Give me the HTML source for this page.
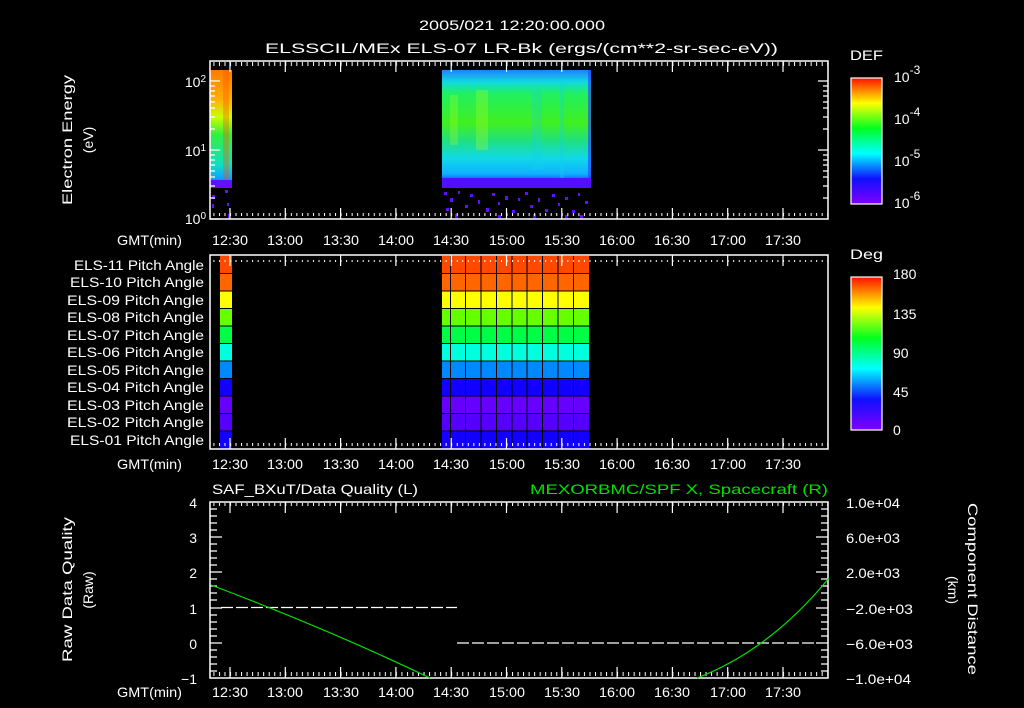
<!DOCTYPE html>
<html><head><meta charset="utf-8"><style>
html,body{margin:0;padding:0;background:#000;}
svg{display:block}
text{font-family:"Liberation Sans",sans-serif;fill:#fff;font-size:14px}
</style></head><body>
<svg width="1024" height="708" viewBox="0 0 1024 708" xmlns="http://www.w3.org/2000/svg">
<defs>
<pattern id="tkT" x="230" y="0" width="5.53" height="10" patternUnits="userSpaceOnUse"><rect x="0" y="0" width="1" height="6" fill="#fff"/></pattern>
<linearGradient id="specL" x1="0" y1="0" x2="0" y2="1">
<stop offset="0" stop-color="#ff7a00"/><stop offset="0.25" stop-color="#ffb000"/><stop offset="0.4" stop-color="#c8ff00"/><stop offset="0.55" stop-color="#30f040"/><stop offset="0.8" stop-color="#10e0c0"/><stop offset="0.92" stop-color="#10a0ff"/><stop offset="1" stop-color="#5020ff"/></linearGradient>
<linearGradient id="specR" x1="0" y1="0" x2="0" y2="1">
<stop offset="0" stop-color="#2080ff"/><stop offset="0.1" stop-color="#10d8e0"/><stop offset="0.2" stop-color="#20f060"/><stop offset="0.45" stop-color="#40f020"/><stop offset="0.6" stop-color="#20e080"/><stop offset="0.75" stop-color="#10d8e8"/><stop offset="0.88" stop-color="#10b0ff"/><stop offset="0.95" stop-color="#1040ff"/><stop offset="1" stop-color="#6010ff"/></linearGradient>
<linearGradient id="cbar" x1="0" y1="0" x2="0" y2="1">
<stop offset="0" stop-color="#ff1000"/><stop offset="0.2" stop-color="#ffff00"/><stop offset="0.4" stop-color="#00ff20"/><stop offset="0.6" stop-color="#00ffff"/><stop offset="0.8" stop-color="#1010ff"/><stop offset="1" stop-color="#8000ff"/></linearGradient>
</defs>

<text x="419" y="30" font-size="17" textLength="186" lengthAdjust="spacingAndGlyphs">2005/021 12:20:00.000</text>
<text x="265" y="53" font-size="17" textLength="513" lengthAdjust="spacingAndGlyphs">ELSSCIL/MEx ELS-07 LR-Bk  (ergs/(cm**2-sr-sec-eV))</text>

<!-- TOP PANEL -->
<rect x="210" y="70" width="22" height="118" fill="url(#specL)"/>
<rect x="223" y="70" width="6" height="118" fill="#ff5000" opacity="0.35"/>
<rect x="442" y="70" width="149" height="118" fill="url(#specR)"/>
<rect x="476" y="90" width="12" height="60" fill="#b0ff20" opacity="0.3"/>
<rect x="450" y="95" width="8" height="50" fill="#c0ff20" opacity="0.25"/>
<rect x="532" y="90" width="10" height="80" fill="#10d0f0" opacity="0.25"/>
<rect x="560" y="80" width="4" height="100" fill="#10d0f0" opacity="0.3"/>
<rect x="588" y="70" width="3" height="118" fill="#2040ff" opacity="0.6"/>
<rect x="210" y="180" width="22" height="8" fill="#6010ff"/>
<rect x="442" y="178" width="149" height="10" fill="#5010ff"/>
<g fill="#6010ff">
<rect x="212" y="195" width="3" height="4"/><rect x="225" y="190" width="3" height="3"/><rect x="212" y="204" width="2" height="4"/><rect x="227" y="203" width="2" height="3"/><rect x="228" y="214" width="2" height="4"/>
<rect x="444" y="192" width="3" height="3"/><rect x="450" y="198" width="3" height="4"/><rect x="458" y="191" width="2" height="3"/><rect x="446" y="208" width="3" height="3"/><rect x="465" y="205" width="3" height="3"/><rect x="470" y="194" width="3" height="3"/>
<rect x="478" y="200" width="2" height="4"/><rect x="486" y="208" width="3" height="4"/><rect x="492" y="193" width="3" height="3"/><rect x="498" y="202" width="2" height="3"/><rect x="505" y="196" width="3" height="4"/><rect x="512" y="210" width="3" height="3"/>
<rect x="518" y="198" width="2" height="3"/><rect x="525" y="192" width="3" height="3"/><rect x="530" y="205" width="3" height="3"/><rect x="538" y="198" width="2" height="4"/><rect x="545" y="209" width="3" height="3"/><rect x="552" y="194" width="3" height="3"/>
<rect x="558" y="203" width="2" height="3"/><rect x="565" y="197" width="3" height="3"/><rect x="572" y="210" width="3" height="3"/><rect x="578" y="193" width="2" height="3"/><rect x="585" y="201" width="3" height="3"/><rect x="455" y="214" width="3" height="4"/><rect x="498" y="215" width="3" height="3"/><rect x="533" y="214" width="3" height="4"/><rect x="565" y="215" width="3" height="3"/><rect x="580" y="215" width="3" height="3"/>
</g>
<rect x="210" y="61" width="618" height="158" fill="none" stroke="#fff" stroke-width="1.5"/>
<rect x="210" y="62" width="618" height="6" fill="url(#tkT)"/>
<rect x="210" y="213" width="618" height="6" fill="url(#tkT)"/>
<g stroke="#fff" stroke-width="1.2">
<path d="M230 61v11M285.3 61v11M340.6 61v11M395.9 61v11M451.2 61v11M506.5 61v11M561.8 61v11M617.1 61v11M672.4 61v11M727.7 61v11M783 61v11"/>
<path d="M230 219v-11M285.3 219v-11M340.6 219v-11M395.9 219v-11M451.2 219v-11M506.5 219v-11M561.8 219v-11M617.1 219v-11M672.4 219v-11M727.7 219v-11M783 219v-11"/>
<path d="M210 81h10M210 150h10M210 219h10M210 198h5M210 186h5M210 177h5M210 171h5M210 165h5M210 160h5M210 155h5M210 129h5M210 117h5M210 108h5M210 102h5M210 96h5M210 91h5M210 86h5"/>
<path d="M828 81h-10M828 150h-10M828 198h-5M828 186h-5M828 177h-5M828 171h-5M828 165h-5M828 160h-5M828 155h-5M828 129h-5M828 117h-5M828 108h-5M828 102h-5M828 96h-5M828 91h-5M828 86h-5"/>
</g>
<text x="206" y="87" text-anchor="end" font-size="14">10<tspan dy="-5" font-size="10">2</tspan></text>
<text x="206" y="156" text-anchor="end" font-size="14">10<tspan dy="-5" font-size="10">1</tspan></text>
<text x="206" y="224" text-anchor="end" font-size="14">10<tspan dy="-5" font-size="10">0</tspan></text>
<text transform="translate(72,205) rotate(-90)" font-size="15" textLength="130" lengthAdjust="spacingAndGlyphs">Electron Energy</text>
<text transform="translate(93,140) rotate(-90)" text-anchor="middle" font-size="15">(eV)</text>
<g font-size="15">
<text x="212" y="245" textLength="36" lengthAdjust="spacingAndGlyphs">12:30</text><text x="267" y="245" textLength="36" lengthAdjust="spacingAndGlyphs">13:00</text><text x="323" y="245" textLength="36" lengthAdjust="spacingAndGlyphs">13:30</text><text x="378" y="245" textLength="36" lengthAdjust="spacingAndGlyphs">14:00</text><text x="433" y="245" textLength="36" lengthAdjust="spacingAndGlyphs">14:30</text><text x="489" y="245" textLength="36" lengthAdjust="spacingAndGlyphs">15:00</text><text x="544" y="245" textLength="36" lengthAdjust="spacingAndGlyphs">15:30</text><text x="599" y="245" textLength="36" lengthAdjust="spacingAndGlyphs">16:00</text><text x="654" y="245" textLength="36" lengthAdjust="spacingAndGlyphs">16:30</text><text x="710" y="245" textLength="36" lengthAdjust="spacingAndGlyphs">17:00</text><text x="765" y="245" textLength="36" lengthAdjust="spacingAndGlyphs">17:30</text>
</g>
<text x="117" y="245" font-size="15" textLength="65" lengthAdjust="spacingAndGlyphs">GMT(min)</text>
<!-- DEF colorbar -->
<text x="850" y="60" font-size="17" textLength="33" lengthAdjust="spacingAndGlyphs">DEF</text>
<rect x="851" y="78" width="31" height="126" fill="url(#cbar)" stroke="#fff" stroke-width="1.2"/>
<text x="894" y="82" font-size="17">10<tspan dy="-8" font-size="12">-3</tspan></text>
<text x="894" y="124" font-size="17">10<tspan dy="-8" font-size="12">-4</tspan></text>
<text x="894" y="166" font-size="17">10<tspan dy="-8" font-size="12">-5</tspan></text>
<text x="894" y="208" font-size="17">10<tspan dy="-8" font-size="12">-6</tspan></text>

<!-- PITCH PANEL -->
<rect x="220" y="256" width="12" height="17.5" fill="#ff4800"/>
<rect x="220" y="273.5" width="12" height="17.5" fill="#ff6600"/>
<rect x="220" y="291" width="12" height="17.5" fill="#ffff00"/>
<rect x="220" y="308.5" width="12" height="17.5" fill="#66ff00"/>
<rect x="220" y="326" width="12" height="17.5" fill="#00ff44"/>
<rect x="220" y="343.5" width="12" height="17.5" fill="#00ffdd"/>
<rect x="220" y="361" width="12" height="17.5" fill="#0088ff"/>
<rect x="220" y="378.5" width="12" height="17.5" fill="#1100ff"/>
<rect x="220" y="396" width="12" height="17.5" fill="#6600ff"/>
<rect x="220" y="413.5" width="12" height="17.5" fill="#5500ff"/>
<rect x="220" y="431" width="12" height="18" fill="#1100ff"/>
<rect x="442" y="256" width="147" height="17.5" fill="#ff4800"/>
<rect x="442" y="273.5" width="147" height="17.5" fill="#ff6600"/>
<rect x="442" y="291" width="147" height="17.5" fill="#ffff00"/>
<rect x="442" y="308.5" width="147" height="17.5" fill="#66ff00"/>
<rect x="442" y="326" width="147" height="17.5" fill="#00ff44"/>
<rect x="442" y="343.5" width="147" height="17.5" fill="#00ffdd"/>
<rect x="442" y="361" width="147" height="17.5" fill="#0088ff"/>
<rect x="442" y="378.5" width="147" height="17.5" fill="#1100ff"/>
<rect x="442" y="396" width="147" height="17.5" fill="#6600ff"/>
<rect x="442" y="413.5" width="147" height="17.5" fill="#5500ff"/>
<rect x="442" y="431" width="147" height="18" fill="#1100ff"/>
<g stroke="#000" stroke-width="1">
<path d="M220 273.5h12M220 291h12M220 308.5h12M220 326h12M220 343.5h12M220 361h12M220 378.5h12M220 396h12M220 413.5h12M220 431h12"/>
<path d="M442 273.5h147M442 291h147M442 308.5h147M442 326h147M442 343.5h147M442 361h147M442 378.5h147M442 396h147M442 413.5h147M442 431h147"/>
<path d="M450.5 256v193M465.5 256v193M481 256v193M496.5 256v193M512 256v193M527 256v193M542.5 256v193M558 256v193M573.5 256v193"/>
</g>
<rect x="210" y="255" width="618" height="194" fill="none" stroke="#fff" stroke-width="1.5"/>
<rect x="210" y="256" width="618" height="6" fill="url(#tkT)"/>
<rect x="210" y="443" width="618" height="6" fill="url(#tkT)"/>
<g stroke="#fff" stroke-width="1.2">
<path d="M230 255v11M285.3 255v11M340.6 255v11M395.9 255v11M451.2 255v11M506.5 255v11M561.8 255v11M617.1 255v11M672.4 255v11M727.7 255v11M783 255v11"/>
<path d="M230 449v-11M285.3 449v-11M340.6 449v-11M395.9 449v-11M451.2 449v-11M506.5 449v-11M561.8 449v-11M617.1 449v-11M672.4 449v-11M727.7 449v-11M783 449v-11"/>
</g>
<g font-size="14">
<text x="74" y="270" textLength="130" lengthAdjust="spacingAndGlyphs">ELS-11 Pitch Angle</text>
<text x="70" y="287" textLength="134" lengthAdjust="spacingAndGlyphs">ELS-10 Pitch Angle</text>
<text x="67" y="305" textLength="137" lengthAdjust="spacingAndGlyphs">ELS-09 Pitch Angle</text>
<text x="67" y="322" textLength="137" lengthAdjust="spacingAndGlyphs">ELS-08 Pitch Angle</text>
<text x="67" y="340" textLength="137" lengthAdjust="spacingAndGlyphs">ELS-07 Pitch Angle</text>
<text x="67" y="357" textLength="137" lengthAdjust="spacingAndGlyphs">ELS-06 Pitch Angle</text>
<text x="67" y="375" textLength="137" lengthAdjust="spacingAndGlyphs">ELS-05 Pitch Angle</text>
<text x="67" y="392" textLength="137" lengthAdjust="spacingAndGlyphs">ELS-04 Pitch Angle</text>
<text x="67" y="410" textLength="137" lengthAdjust="spacingAndGlyphs">ELS-03 Pitch Angle</text>
<text x="67" y="427" textLength="137" lengthAdjust="spacingAndGlyphs">ELS-02 Pitch Angle</text>
<text x="70" y="445" textLength="134" lengthAdjust="spacingAndGlyphs">ELS-01 Pitch Angle</text>
</g>
<g font-size="15">
<text x="212" y="469" textLength="36" lengthAdjust="spacingAndGlyphs">12:30</text><text x="267" y="469" textLength="36" lengthAdjust="spacingAndGlyphs">13:00</text><text x="323" y="469" textLength="36" lengthAdjust="spacingAndGlyphs">13:30</text><text x="378" y="469" textLength="36" lengthAdjust="spacingAndGlyphs">14:00</text><text x="433" y="469" textLength="36" lengthAdjust="spacingAndGlyphs">14:30</text><text x="489" y="469" textLength="36" lengthAdjust="spacingAndGlyphs">15:00</text><text x="544" y="469" textLength="36" lengthAdjust="spacingAndGlyphs">15:30</text><text x="599" y="469" textLength="36" lengthAdjust="spacingAndGlyphs">16:00</text><text x="654" y="469" textLength="36" lengthAdjust="spacingAndGlyphs">16:30</text><text x="710" y="469" textLength="36" lengthAdjust="spacingAndGlyphs">17:00</text><text x="765" y="469" textLength="36" lengthAdjust="spacingAndGlyphs">17:30</text>
</g>
<text x="117" y="469" font-size="15" textLength="65" lengthAdjust="spacingAndGlyphs">GMT(min)</text>
<text x="850" y="259" font-size="17" textLength="33" lengthAdjust="spacingAndGlyphs">Deg</text>
<rect x="851" y="277" width="31" height="153" fill="url(#cbar)" stroke="#fff" stroke-width="1.2"/>
<g font-size="17"><text x="893" y="279">180</text><text x="893" y="319">135</text><text x="893" y="358">90</text><text x="893" y="397">45</text><text x="893" y="435">0</text></g>

<!-- BOTTOM PANEL -->
<text x="212" y="494" font-size="16" textLength="206" lengthAdjust="spacingAndGlyphs">SAF_BXuT/Data Quality (L)</text>
<text x="530" y="494" font-size="16" style="fill:#00e000" textLength="298" lengthAdjust="spacingAndGlyphs">MEXORBMC/SPF X, Spacecraft (R)</text>
<rect x="210" y="502" width="618" height="176" fill="none" stroke="#fff" stroke-width="1.5"/>
<rect x="210" y="503" width="618" height="6" fill="url(#tkT)"/>
<rect x="210" y="672" width="618" height="6" fill="url(#tkT)"/>
<g stroke="#fff" stroke-width="1.2">
<path d="M230 502v11M285.3 502v11M340.6 502v11M395.9 502v11M451.2 502v11M506.5 502v11M561.8 502v11M617.1 502v11M672.4 502v11M727.7 502v11M783 502v11"/>
<path d="M230 678v-11M285.3 678v-11M340.6 678v-11M395.9 678v-11M451.2 678v-11M506.5 678v-11M561.8 678v-11M617.1 678v-11M672.4 678v-11M727.7 678v-11M783 678v-11"/>
<path d="M210 537h12M210 572h12M210 608h12M210 643h12M210 509h7M210 516h7M210 523h7M210 530h7M210 544h7M210 551h7M210 558h7M210 565h7M210 579h7M210 586h7M210 593h7M210 600h7M210 615h7M210 622h7M210 629h7M210 636h7M210 650h7M210 657h7M210 664h7M210 671h7"/>
<path d="M828 537h-12M828 572h-12M828 608h-12M828 643h-12M828 509h-7M828 516h-7M828 523h-7M828 530h-7M828 544h-7M828 551h-7M828 558h-7M828 565h-7M828 579h-7M828 586h-7M828 593h-7M828 600h-7M828 615h-7M828 622h-7M828 629h-7M828 636h-7M828 650h-7M828 657h-7M828 664h-7M828 671h-7"/>
<path d="M221 607.5h236M457 643h361" stroke-dasharray="12 3"/>
</g>
<path d="M211 585 Q330 630 430 678" fill="none" stroke="#00e000" stroke-width="1.2"/>
<path d="M697 678 Q770 650 829 578" fill="none" stroke="#00e000" stroke-width="1.2"/>
<g font-size="16" text-anchor="end">
<text x="197" y="508">4</text><text x="197" y="543">3</text><text x="197" y="578">2</text><text x="197" y="614">1</text><text x="197" y="649">0</text><text x="197" y="684">−1</text>
</g>
<g font-size="15">
<text x="846" y="508" textLength="54" lengthAdjust="spacingAndGlyphs">1.0e+04</text><text x="846" y="543" textLength="54" lengthAdjust="spacingAndGlyphs">6.0e+03</text><text x="846" y="578" textLength="54" lengthAdjust="spacingAndGlyphs">2.0e+03</text><text x="846" y="614" textLength="67" lengthAdjust="spacingAndGlyphs">−2.0e+03</text><text x="846" y="649" textLength="67" lengthAdjust="spacingAndGlyphs">−6.0e+03</text><text x="846" y="684" textLength="65" lengthAdjust="spacingAndGlyphs">−1.0e+04</text>
</g>
<text transform="translate(72,662) rotate(-90)" font-size="15" textLength="145" lengthAdjust="spacingAndGlyphs">Raw Data Quality</text>
<text transform="translate(93,590) rotate(-90)" text-anchor="middle" font-size="15">(Raw)</text>
<text transform="translate(968,503) rotate(90)" font-size="16" textLength="172" lengthAdjust="spacingAndGlyphs">Component Distance</text>
<text transform="translate(948,590) rotate(90)" text-anchor="middle" font-size="16">(km)</text>
<g font-size="15">
<text x="212" y="697" textLength="36" lengthAdjust="spacingAndGlyphs">12:30</text><text x="267" y="697" textLength="36" lengthAdjust="spacingAndGlyphs">13:00</text><text x="323" y="697" textLength="36" lengthAdjust="spacingAndGlyphs">13:30</text><text x="378" y="697" textLength="36" lengthAdjust="spacingAndGlyphs">14:00</text><text x="433" y="697" textLength="36" lengthAdjust="spacingAndGlyphs">14:30</text><text x="489" y="697" textLength="36" lengthAdjust="spacingAndGlyphs">15:00</text><text x="544" y="697" textLength="36" lengthAdjust="spacingAndGlyphs">15:30</text><text x="599" y="697" textLength="36" lengthAdjust="spacingAndGlyphs">16:00</text><text x="654" y="697" textLength="36" lengthAdjust="spacingAndGlyphs">16:30</text><text x="710" y="697" textLength="36" lengthAdjust="spacingAndGlyphs">17:00</text><text x="765" y="697" textLength="36" lengthAdjust="spacingAndGlyphs">17:30</text>
</g>
<text x="117" y="697" font-size="15" textLength="65" lengthAdjust="spacingAndGlyphs">GMT(min)</text>
</svg>
</body></html>
